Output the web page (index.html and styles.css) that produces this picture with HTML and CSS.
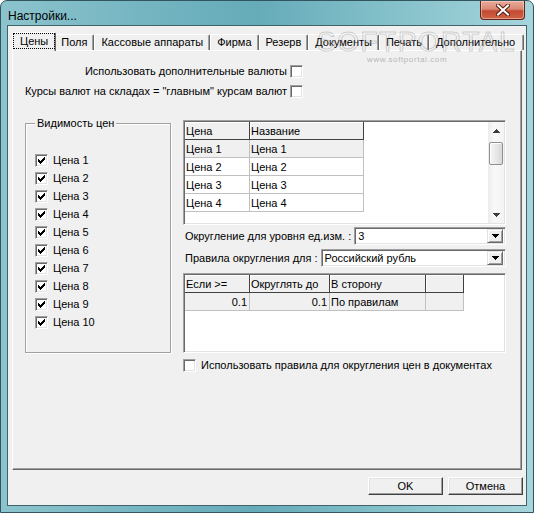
FILE: index.html
```html
<!DOCTYPE html>
<html lang="ru">
<head>
<meta charset="utf-8">
<title>Настройки</title>
<link rel="stylesheet" href="styles.css">
</head>
<body>
<div class="window">
  <div class="titlebar">
    <span class="title">Настройки...</span>
    <div class="close-btn">
      <svg width="14" height="12" viewBox="0 0 14 12"><path d="M2 1.5 L12 10.5 M12 1.5 L2 10.5" stroke="#5a1a10" stroke-width="4" stroke-linecap="square"/><path d="M2 1.5 L12 10.5 M12 1.5 L2 10.5" stroke="#fff" stroke-width="2" stroke-linecap="square"/></svg>
    </div>
  </div>
  <div class="client">
    <div class="watermark">SOFTPORTAL<span class="wm-url">www.softportal.com</span></div>
    <div class="tabs">
      <div class="tab active"><span class="focus">Цены</span></div>
      <div class="tab">Поля</div>
      <div class="tab">Кассовые аппараты</div>
      <div class="tab">Фирма</div>
      <div class="tab">Резерв</div>
      <div class="tab">Документы</div>
      <div class="tab">Печать</div>
      <div class="tab">Дополнительно</div>
    </div>
    <div class="pane">
      <div class="top-opts">
        <span class="opt-label">Использовать дополнительные валюты</span><span class="cb"></span>
        <span class="opt-label">Курсы валют на складах = "главным" курсам валют</span><span class="cb"></span>
      </div>
      <div class="main">
        <div class="group">
          <div class="legend">Видимость цен</div>
          <ul class="price-list">
            <li><span class="cb"><svg class="chk" width="7" height="7" viewBox="0 0 7 7" shape-rendering="crispEdges"><path d="M6 0h1v1h-1zM5 1h2v1h-2zM0 2h1v1h-1zM4 2h3v1h-3zM0 3h2v1h-2zM3 3h3v1h-3zM0 4h5v1h-5zM1 5h3v1h-3zM2 6h1v1h-1z"/></svg></span>Цена 1</li>
            <li><span class="cb"><svg class="chk" width="7" height="7" viewBox="0 0 7 7" shape-rendering="crispEdges"><path d="M6 0h1v1h-1zM5 1h2v1h-2zM0 2h1v1h-1zM4 2h3v1h-3zM0 3h2v1h-2zM3 3h3v1h-3zM0 4h5v1h-5zM1 5h3v1h-3zM2 6h1v1h-1z"/></svg></span>Цена 2</li>
            <li><span class="cb"><svg class="chk" width="7" height="7" viewBox="0 0 7 7" shape-rendering="crispEdges"><path d="M6 0h1v1h-1zM5 1h2v1h-2zM0 2h1v1h-1zM4 2h3v1h-3zM0 3h2v1h-2zM3 3h3v1h-3zM0 4h5v1h-5zM1 5h3v1h-3zM2 6h1v1h-1z"/></svg></span>Цена 3</li>
            <li><span class="cb"><svg class="chk" width="7" height="7" viewBox="0 0 7 7" shape-rendering="crispEdges"><path d="M6 0h1v1h-1zM5 1h2v1h-2zM0 2h1v1h-1zM4 2h3v1h-3zM0 3h2v1h-2zM3 3h3v1h-3zM0 4h5v1h-5zM1 5h3v1h-3zM2 6h1v1h-1z"/></svg></span>Цена 4</li>
            <li><span class="cb"><svg class="chk" width="7" height="7" viewBox="0 0 7 7" shape-rendering="crispEdges"><path d="M6 0h1v1h-1zM5 1h2v1h-2zM0 2h1v1h-1zM4 2h3v1h-3zM0 3h2v1h-2zM3 3h3v1h-3zM0 4h5v1h-5zM1 5h3v1h-3zM2 6h1v1h-1z"/></svg></span>Цена 5</li>
            <li><span class="cb"><svg class="chk" width="7" height="7" viewBox="0 0 7 7" shape-rendering="crispEdges"><path d="M6 0h1v1h-1zM5 1h2v1h-2zM0 2h1v1h-1zM4 2h3v1h-3zM0 3h2v1h-2zM3 3h3v1h-3zM0 4h5v1h-5zM1 5h3v1h-3zM2 6h1v1h-1z"/></svg></span>Цена 6</li>
            <li><span class="cb"><svg class="chk" width="7" height="7" viewBox="0 0 7 7" shape-rendering="crispEdges"><path d="M6 0h1v1h-1zM5 1h2v1h-2zM0 2h1v1h-1zM4 2h3v1h-3zM0 3h2v1h-2zM3 3h3v1h-3zM0 4h5v1h-5zM1 5h3v1h-3zM2 6h1v1h-1z"/></svg></span>Цена 7</li>
            <li><span class="cb"><svg class="chk" width="7" height="7" viewBox="0 0 7 7" shape-rendering="crispEdges"><path d="M6 0h1v1h-1zM5 1h2v1h-2zM0 2h1v1h-1zM4 2h3v1h-3zM0 3h2v1h-2zM3 3h3v1h-3zM0 4h5v1h-5zM1 5h3v1h-3zM2 6h1v1h-1z"/></svg></span>Цена 8</li>
            <li><span class="cb"><svg class="chk" width="7" height="7" viewBox="0 0 7 7" shape-rendering="crispEdges"><path d="M6 0h1v1h-1zM5 1h2v1h-2zM0 2h1v1h-1zM4 2h3v1h-3zM0 3h2v1h-2zM3 3h3v1h-3zM0 4h5v1h-5zM1 5h3v1h-3zM2 6h1v1h-1z"/></svg></span>Цена 9</li>
            <li><span class="cb"><svg class="chk" width="7" height="7" viewBox="0 0 7 7" shape-rendering="crispEdges"><path d="M6 0h1v1h-1zM5 1h2v1h-2zM0 2h1v1h-1zM4 2h3v1h-3zM0 3h2v1h-2zM3 3h3v1h-3zM0 4h5v1h-5zM1 5h3v1h-3zM2 6h1v1h-1z"/></svg></span>Цена 10</li>
          </ul>
        </div>
        <div class="right">
          <div class="grid grid1">
            <div class="grid-body">
              <table>
                <thead><tr><th class="g1c1">Цена</th><th class="g1c2">Название</th></tr></thead>
                <tbody>
                  <tr class="sel"><td>Цена 1</td><td>Цена 1</td></tr>
                  <tr><td>Цена 2</td><td>Цена 2</td></tr>
                  <tr><td>Цена 3</td><td>Цена 3</td></tr>
                  <tr><td>Цена 4</td><td>Цена 4</td></tr>
                </tbody>
              </table>
            </div>
            <div class="vscroll">
              <span class="sb-arrow"><svg width="7" height="4" viewBox="0 0 7 4" shape-rendering="crispEdges"><path d="M3 0h1v1h-1zM2 1h3v1h-3zM1 2h5v1h-5zM0 3h7v1h-7z" fill="#3c3c3c"/></svg></span>
              <span class="sb-thumb"></span>
              <span class="sb-track"></span>
              <span class="sb-arrow"><svg width="7" height="4" viewBox="0 0 7 4" shape-rendering="crispEdges"><path d="M0 0h7v1h-7zM1 1h5v1h-5zM2 2h3v1h-3zM3 3h1v1h-1z" fill="#3c3c3c"/></svg></span>
            </div>
          </div>
          <div class="combo-row r1">
            <span class="combo-label">Округление для уровня ед.изм. :</span>
            <div class="combo"><span class="combo-val">3</span><span class="combo-btn"><svg width="7" height="4" viewBox="0 0 7 4" shape-rendering="crispEdges"><path d="M0 0h7v1h-7zM1 1h5v1h-5zM2 2h3v1h-3zM3 3h1v1h-1z"/></svg></span></div>
          </div>
          <div class="combo-row r2">
            <span class="combo-label">Правила округления для :</span>
            <div class="combo"><span class="combo-val">Российский рубль</span><span class="combo-btn"><svg width="7" height="4" viewBox="0 0 7 4" shape-rendering="crispEdges"><path d="M0 0h7v1h-7zM1 1h5v1h-5zM2 2h3v1h-3zM3 3h1v1h-1z"/></svg></span></div>
          </div>
          <div class="grid grid2">
            <div class="grid-body">
              <table>
                <thead><tr><th class="g2c1">Если &gt;=</th><th class="g2c2">Округлять до</th><th class="g2c3">В сторону</th><th class="g2c4"></th></tr></thead>
                <tbody>
                  <tr class="sel"><td class="num">0.1</td><td class="num">0.1</td><td>По правилам</td><td></td></tr>
                </tbody>
              </table>
            </div>
          </div>
          <div class="cb-row"><span class="cb"></span><span>Использовать правила для округления цен в документах</span></div>
        </div>
      </div>
    </div>
    <div class="footer">
      <button class="btn">OK</button>
      <button class="btn">Отмена</button>
    </div>
  </div>
</div>
</body>
</html>
```

FILE: styles.css
```css
* { box-sizing: border-box; }
html, body { margin: 0; padding: 0; }
body {
  width: 534px;
  height: 513px;
  overflow: hidden;
  background: #ffffff;
  font-family: "Liberation Sans", Arial, sans-serif;
  font-size: 11px;
  color: #000;
}

.window {
  width: 534px;
  height: 513px;
  border: 1px solid #33565e;
  border-radius: 7px 7px 0 0;
  background: linear-gradient(90deg, #8cc4cd 0%, #76b6c2 25%, #66abb9 48%, #80bec8 70%, #a6d5dc 100%);
  padding: 0 6px 6px 6px;
  display: flex;
  flex-direction: column;
}

.titlebar {
  height: 24px;
  display: flex;
  justify-content: space-between;
  align-items: flex-start;
}
.title {
  font-size: 12px;
  line-height: 14px;
  margin: 8px 0 0 1px;
}
.close-btn {
  width: 45px;
  height: 19px;
  margin-right: 2px;
  border: 1px solid #5d2418;
  border-top: none;
  border-radius: 0 0 4px 4px;
  background: linear-gradient(180deg, #e8ab9c 0%, #d98a75 45%, #c24a30 55%, #cf6446 100%);
  box-shadow: inset 0 0 0 1px rgba(255, 220, 210, 0.5);
  display: flex;
  align-items: center;
  justify-content: center;
}
.close-btn svg { display: block; }

.client {
  flex: 1;
  position: relative;
  border: 1px solid #43636a;
  background: #f0f0f0;
  display: flex;
  flex-direction: column;
}

.watermark {
  position: absolute;
  left: 309px;
  top: 3px;
  font-size: 28px;
  line-height: 26px;
  letter-spacing: 1.5px;
  color: rgba(255, 255, 255, 0.15);
  -webkit-text-stroke: 1px rgba(120, 120, 120, 0.32);
  pointer-events: none;
  z-index: 5;
}
.wm-url {
  display: block;
  font-size: 8px;
  line-height: 9px;
  letter-spacing: 0.6px;
  margin-left: 50px;
  -webkit-text-stroke: 0;
  color: rgba(130, 130, 130, 0.55);
}

.tabs {
  display: flex;
  align-items: flex-end;
  height: 18px;
  margin-top: 6px;
  padding-left: 6px;
}
.tab {
  height: 16px;
  padding: 0 6px;
  line-height: 15px;
  white-space: nowrap;
  border-top: 1px solid #fff;
  border-left: 1px solid #fff;
  border-right: 1px solid #696969;
  border-radius: 2px 2px 0 0;
  box-shadow: inset -1px 0 0 #a0a0a0;
  background: #f0f0f0;
}
.tab:last-child { padding-right: 8px; }
.tab.active {
  position: relative;
  z-index: 2;
  height: 19px;
  margin: 0 -2px -1px -2px;
  padding: 0 1px;
  line-height: 15px;
}
.focus {
  display: inline-block;
  outline: 1px dotted #000;
  outline-offset: 0;
  padding: 0 6px;
  line-height: 14px;
  margin-top: 1px;
}

.pane {
  height: 420px;
  margin: 0 4px;
  border: 1px solid;
  border-color: #fff #696969 #696969 #fff;
  box-shadow: inset -1px -1px 0 #a0a0a0;
}

.top-opts {
  width: 290px;
  margin-top: 10px;
  display: grid;
  grid-template-columns: 1fr 13px;
  grid-auto-rows: 20px;
  column-gap: 3px;
  align-items: center;
}
.opt-label { text-align: right; white-space: nowrap; }

.cb {
  display: inline-block;
  flex: none;
  width: 13px;
  height: 13px;
  background: #fff;
  border: 1px solid;
  border-color: #a0a0a0 #fff #fff #a0a0a0;
  box-shadow: inset 1px 1px 0 #696969, inset -1px -1px 0 #e3e3e3;
}
.chk { display: block; margin: 2px 0 0 2px; }

.main {
  display: flex;
  align-items: flex-start;
  margin-top: 19px;
}

.group {
  width: 146px;
  height: 230px;
  margin: 3px 0 0 12px;
  border: 1px solid #a0a0a0;
  box-shadow: inset 1px 1px 0 #fff, 1px 1px 0 #fff;
}
.legend {
  display: table;
  margin: -7px 0 0 9px;
  padding: 0 2px;
  line-height: 13px;
  background: #f0f0f0;
}
.price-list {
  list-style: none;
  margin: 21px 0 0 0;
  padding: 0 0 0 9px;
}
.price-list li {
  height: 18px;
  display: flex;
  align-items: center;
  gap: 5px;
}

.right {
  width: 323px;
  margin-left: 12px;
}

.grid {
  border: 1px solid;
  border-color: #a0a0a0 #fff #fff #a0a0a0;
  box-shadow: inset 1px 1px 0 #696969, inset -1px -1px 0 #e3e3e3;
  padding: 1px;
  display: flex;
  background: #fff;
}
.grid1 { height: 105px; }
.grid2 { height: 80px; margin-top: 6px; }
.grid-body { flex: 1; background: #fff; }

.grid table {
  border-collapse: separate;
  border-spacing: 0;
  table-layout: fixed;
}
.grid th, .grid td {
  height: 18px;
  padding: 0 2px 0 1px;
  white-space: nowrap;
  overflow: hidden;
  font-weight: normal;
  text-align: left;
  vertical-align: middle;
}
.grid th {
  background: #f0f0f0;
  border-right: 1px solid #404040;
  border-bottom: 1px solid #404040;
  box-shadow: inset 1px 1px 0 #fff;
}
.grid td {
  border-right: 1px solid #c0c0c0;
  border-bottom: 1px solid #c0c0c0;
}
.grid tr.sel td { background: #f0f0f0; }
.grid td.num { text-align: right; }

.g1c1 { width: 65px; }
.g1c2 { width: 114px; }
.g2c1 { width: 65px; }
.g2c2 { width: 80px; }
.g2c3 { width: 96px; }
.g2c4 { width: 38px; }

.vscroll {
  width: 16px;
  display: flex;
  flex-direction: column;
  align-items: stretch;
  background: linear-gradient(90deg, #ececec, #f8f8f8 40%, #f4f4f4);
}
.sb-arrow {
  height: 17px;
  display: flex;
  align-items: center;
  justify-content: center;
}
.sb-thumb {
  height: 23px;
  margin: 3px 1px 0 1px;
  border: 1px solid #8e8f8f;
  border-radius: 2px;
  background: linear-gradient(90deg, #f6f6f6, #e8e8e8 50%, #d8d8d8);
  box-shadow: inset 1px 1px 0 #fff;
}
.sb-track { flex: 1; }

.combo-row {
  display: flex;
  align-items: center;
  padding-left: 2px;
  gap: 3px;
}
.combo-row.r1 { margin-top: 2px; }
.combo-row.r2 { margin-top: 4px; }
.combo-label { white-space: nowrap; }
.combo {
  flex: 1;
  height: 18px;
  display: flex;
  align-items: center;
  background: #fff;
  border: 1px solid;
  border-color: #a0a0a0 #fff #fff #a0a0a0;
  box-shadow: inset 1px 1px 0 #696969, inset -1px -1px 0 #e3e3e3;
  padding: 1px 2px 1px 1px;
}
.combo-val { flex: 1; padding-left: 2px; }
.combo-btn {
  width: 16px;
  height: 14px;
  display: flex;
  align-items: center;
  justify-content: center;
  background: #f0f0f0;
  border: 1px solid;
  border-color: #e3e3e3 #696969 #696969 #e3e3e3;
  box-shadow: inset 1px 1px 0 #fff, inset -1px -1px 0 #a0a0a0;
}
.combo-btn svg { display: block; }

.cb-row {
  display: flex;
  align-items: center;
  gap: 5px;
  margin-top: 5px;
  height: 14px;
}

.footer {
  display: flex;
  justify-content: flex-end;
  gap: 5px;
  padding: 7px 3px 0 0;
}
.btn {
  width: 75px;
  height: 18px;
  padding: 0;
  font-family: "Liberation Sans", Arial, sans-serif;
  font-size: 11px;
  color: #000;
  background: #f0f0f0;
  border: 1px solid;
  border-color: #fff #404040 #404040 #fff;
  box-shadow: inset -1px -1px 0 #a0a0a0, inset 1px 1px 0 #e3e3e3;
}
```
